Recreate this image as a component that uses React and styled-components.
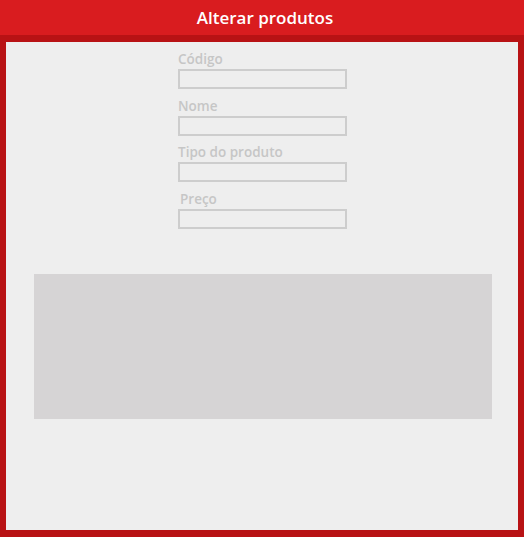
import React from "react";
import styled, { createGlobalStyle } from "styled-components";

const Global = createGlobalStyle`
  html, body { margin: 0; padding: 0; }
  body { font-family: "Open Sans", "Liberation Sans", sans-serif; background: #b81214; }
  * { box-sizing: border-box; }
`;

const Page = styled.div`
  width: 524px;
  height: 537px;
  display: flex;
  flex-direction: column;
`;

const Header = styled.header`
  height: 35px;
  background: #d91c1f;
  color: #ffffff;
  display: flex;
  align-items: center;
  justify-content: center;
  font-size: 17px;
  font-weight: 600;
  padding-left: 6px;
`;

const Frame = styled.main`
  flex: 1;
  background: #b81214;
  padding: 7px 6px 7px 6px;
  display: flex;
`;

const Content = styled.div`
  flex: 1;
  background: #eeeeee;
  display: flex;
  flex-direction: column;
  align-items: center;
  padding-top: 9px;
`;

const Form = styled.form`
  width: 170px;
  margin-left: 2px;
  display: flex;
  flex-direction: column;
  gap: 8.5px;
`;

const Field = styled.div`
  display: flex;
  flex-direction: column;
`;

const Label = styled.label`
  font-size: 13.5px;
  font-weight: 600;
  line-height: 17px;
  color: #c6c6c6;
  margin-bottom: 1px;
  padding-left: ${(p) => p.$indent || 0}px;
`;

const Input = styled.input`
  width: 169px;
  height: 20px;
  border: 2px solid #cdcdcd;
  background: #eeeeee;
  padding: 0 4px;
  outline: none;
  font-family: inherit;
`;

const Panel = styled.div`
  width: 458px;
  height: 145px;
  background: #d6d4d5;
  margin-top: 45px;
  margin-left: 2px;
`;

const fields = [
  { label: "Código" },
  { label: "Nome" },
  { label: "Tipo do produto" },
  { label: "Preço", indent: 2 },
];

export default function App() {
  return (
    <>
      <Global />
      <Page>
        <Header>Alterar produtos</Header>
        <Frame>
          <Content>
            <Form>
              {fields.map((f) => (
                <Field key={f.label}>
                  <Label $indent={f.indent}>{f.label}</Label>
                  <Input type="text" />
                </Field>
              ))}
            </Form>
            <Panel />
          </Content>
        </Frame>
      </Page>
    </>
  );
}
